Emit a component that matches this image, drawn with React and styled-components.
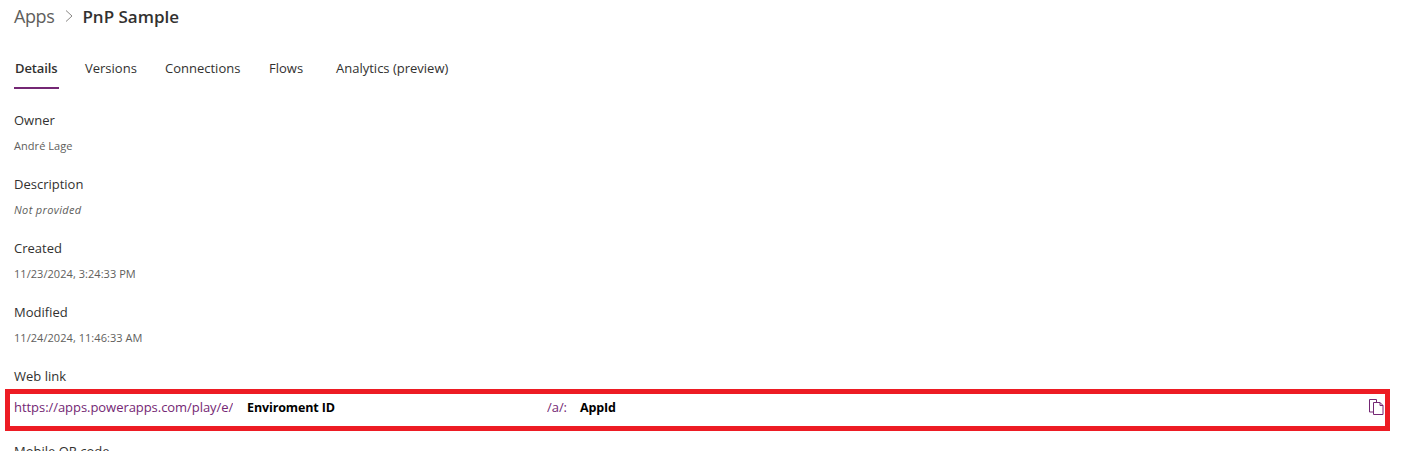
import React from 'react'
import styled, { createGlobalStyle } from 'styled-components'

const fields = [
  { label: 'Owner', value: 'André Lage' },
  { label: 'Description', value: 'Not provided', empty: true },
  { label: 'Created', value: '11/23/2024, 3:24:33 PM' },
  { label: 'Modified', value: '11/24/2024, 11:46:33 AM' },
]

const tabs = [
  { name: 'Details', width: 45, gap: 26, active: true },
  { name: 'Versions', width: 51, gap: 29 },
  { name: 'Connections', width: 76, gap: 28 },
  { name: 'Flows', width: 34, gap: 33 },
  { name: 'Analytics (preview)', width: 113, gap: 0 },
]

const GlobalStyle = createGlobalStyle`
  html, body {
    margin: 0;
    height: 100%;
    overflow: hidden;
    background: #fff;
  }
  body {
    font-family: "Open Sans", "Noto Sans", "Liberation Sans", sans-serif;
  }
`

const Page = styled.div`
  height: 451px;
  overflow: hidden;
  padding-left: 14px;
  box-sizing: border-box;
`

const Breadcrumb = styled.div`
  display: flex;
  align-items: center;
  height: 32px;
`

const Crumb = styled.span`
  font-size: 18px;
  color: #605e5c;
  letter-spacing: -0.4px;
`

const Current = styled.span`
  font-size: 17px;
  font-weight: 600;
  color: #323130;
`

const Chevron = styled.svg`
  width: 10px;
  height: 14px;
  margin: 0 8px 0 10px;
  fill: none;
  stroke: #8a8886;
  stroke-width: 1;
`

const TabBar = styled.div`
  display: flex;
  margin-top: 19px;
  height: 38px;
`

const Tab = styled.div`
  box-sizing: border-box;
  width: ${p => p.$width}px;
  margin-right: ${p => p.$gap}px;
  padding-top: 9px;
  padding-left: ${p => (p.$active ? 1 : 0)}px;
  font-size: 13px;
  line-height: 17px;
  white-space: nowrap;
  color: #323130;
  font-weight: ${p => (p.$active ? 600 : 400)};
  letter-spacing: ${p => (p.$active ? '-0.1px' : '0')};
  border-bottom: 2px solid ${p => (p.$active ? '#742774' : 'transparent')};
`

const FieldList = styled.div`
  padding-top: 22px;
`

const Field = styled.div`
  height: 64px;
`

const Label = styled.div`
  font-size: 13px;
  line-height: 18px;
  color: #323130;
`

const QrLabel = styled(Label)`
  margin-top: 11px;
`

const Value = styled.div`
  margin-top: 9px;
  font-size: 11px;
  line-height: 15px;
  letter-spacing: ${p => (p.$empty ? '0.35px' : '0.05px')};
  color: #605e5c;
  font-style: ${p => (p.$empty ? 'italic' : 'normal')};
`

const LinkBox = styled.div`
  display: flex;
  align-items: center;
  box-sizing: border-box;
  width: 1385px;
  height: 42px;
  margin: 4px 0 0 -9px;
  padding: 0 1px 6px 4px;
  border: 5px solid #ed1c24;
  background: #fff;
`

const LinkPart = styled.a`
  flex: none;
  width: ${p => p.$width}px;
  overflow: hidden;
  white-space: nowrap;
  font-size: 13px;
  letter-spacing: -0.05px;
  color: #742774;
`

const Placeholder = styled.span`
  flex: none;
  width: ${p => p.$width}px;
  margin-left: ${p => p.$offset}px;
  font-size: 12.5px;
  font-weight: 700;
  letter-spacing: -0.12px;
  color: #000;
`

const CopyIcon = styled.svg`
  margin-left: auto;
  width: 15px;
  height: 16px;
  fill: none;
  stroke: #742774;
  stroke-width: 1;
`

export default function App() {
  return (
    <>
      <GlobalStyle />
      <Page>
        <Breadcrumb>
          <Crumb>Apps</Crumb>
          <Chevron viewBox="0 0 10 14">
            <path d="M2 1.5L8 7L2 12.5" />
          </Chevron>
          <Current>PnP Sample</Current>
        </Breadcrumb>
        <TabBar>
          {tabs.map(t => (
            <Tab key={t.name} $width={t.width} $gap={t.gap} $active={t.active}>
              {t.name}
            </Tab>
          ))}
        </TabBar>
        <FieldList>
          {fields.map(f => (
            <Field key={f.label}>
              <Label>{f.label}</Label>
              <Value $empty={f.empty}>{f.value}</Value>
            </Field>
          ))}
          <Label>Web link</Label>
          <LinkBox>
            <LinkPart $width={219}>https://apps.powerapps.com/play/e/</LinkPart>
            <Placeholder $width={300} $offset={14}>Enviroment ID</Placeholder>
            <LinkPart $width={20}>/a/:</LinkPart>
            <Placeholder $width={80} $offset={13}>AppId</Placeholder>
            <CopyIcon viewBox="0 0 15 16">
              <path d="M4 13H.5V.5h7V3" />
              <path d="M4.5 3.5H11L14 6.5V15.5H4.5z" />
              <path d="M11 3.5V6.5H14" />
            </CopyIcon>
          </LinkBox>
          <QrLabel>Mobile QR code</QrLabel>
        </FieldList>
      </Page>
    </>
  )
}
